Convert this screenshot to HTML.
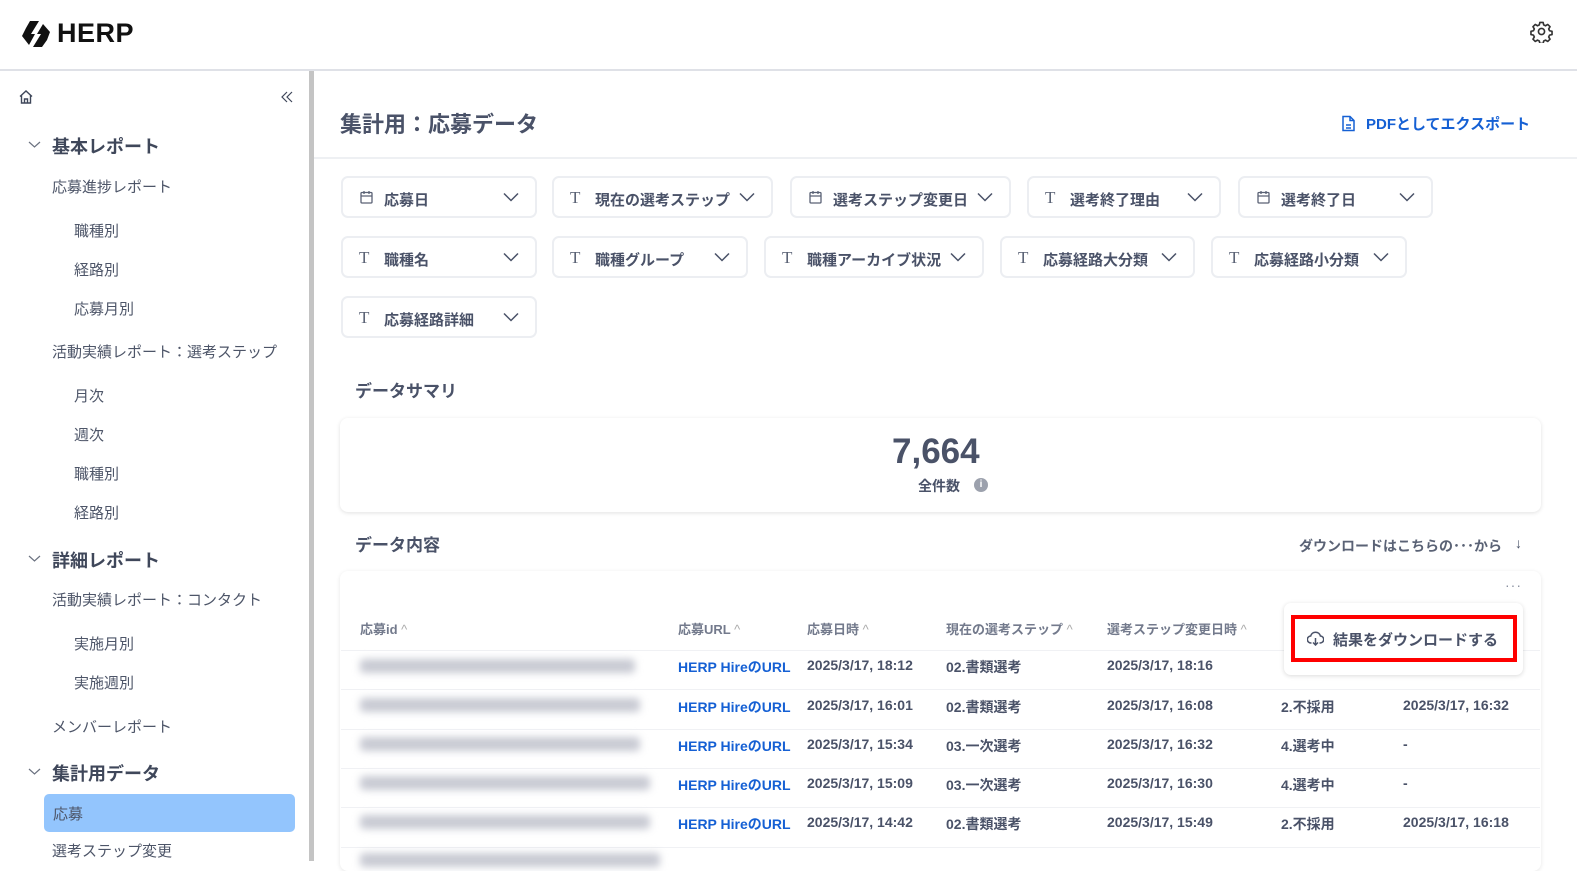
<!DOCTYPE html>
<html><head><meta charset="utf-8"><style>
*{margin:0;padding:0;box-sizing:border-box}
body{width:1577px;height:861px;overflow:hidden;background:#fff;font-family:"Liberation Sans","Noto Sans CJK JP",sans-serif;color:#4a5268;position:relative}
.a{position:absolute;white-space:nowrap}
.side{font-size:15px;color:#4d5568}
.sh{font-size:18px;font-weight:bold;color:#3f475a}
.chip{position:absolute;height:42px;border:2px solid #eceef2;border-radius:7px;background:#fff;font-size:15px;color:#4a5268;font-weight:bold}
.chip .ic{position:absolute;left:16px;top:10px;font-family:"Liberation Serif",serif;font-size:17px;font-weight:normal;color:#5a6275}
.chip svg.ic{top:12px;left:17px}
.chip .tx{position:absolute;left:41px;top:11px}
.chip svg.dv{position:absolute;right:16px;top:14px}
.th{position:absolute;top:619px;font-size:13px;font-weight:bold;color:#737a8c}
.td{position:absolute;font-size:14px;font-weight:bold;color:#4a5268}
.lnk{color:#1560d4}
.hr{position:absolute;left:341px;width:1199px;height:1px;background:#f0f1f4}
.blur{position:absolute;left:360px;height:14px;width:275px;background:#c8cad3;filter:blur(4px);border-radius:4px}
</style></head><body>
<svg class="a" style="left:21px;top:21px" width="32" height="27" viewBox="0 0 32 27"><path d="M9 0h9l-8 13 4 0-6 11L1 15 5 7z" fill="#111"/><path d="M22 3l7 8-3 8-5 7h-9l8-13h-4z" fill="#111"/></svg>
<div class="a" style="left:57px;top:18px;font-size:27px;font-weight:bold;color:#111;letter-spacing:0.5px">HERP</div>
<svg class="a" style="left:1530px;top:20px" width="23" height="23" viewBox="0 0 24 24" fill="none" stroke="#333" stroke-width="1.7"><circle cx="12" cy="12" r="3.2"/><path d="M10.3 2.5h3.4l.6 2.6 1.9.9 2.3-1.4 2.4 2.4-1.4 2.3.9 1.9 2.6.6v3.4l-2.6.6-.9 1.9 1.4 2.3-2.4 2.4-2.3-1.4-1.9.9-.6 2.6h-3.4l-.6-2.6-1.9-.9-2.3 1.4-2.4-2.4 1.4-2.3-.9-1.9-2.6-.6v-3.4l2.6-.6.9-1.9-1.4-2.3 2.4-2.4 2.3 1.4 1.9-.9z" stroke-linejoin="round"/></svg>
<div class="a" style="left:0;top:69px;width:1577px;height:2px;background:#dfe1e7"></div>
<div class="a" style="left:309px;top:71px;width:5px;height:790px;background:#c4c4c4"></div>
<svg class="a" style="left:18px;top:89px" width="16" height="16" viewBox="0 0 16 16" fill="none" stroke="#3f475a" stroke-width="1.4"><path d="M2 7.5L8 2l6 5.5M3.5 6.5V14h9V6.5M6.5 14v-4h3v4"/></svg>
<svg class="a" style="left:280px;top:90px" width="14" height="14" viewBox="0 0 14 14" fill="none" stroke="#3f475a" stroke-width="1.2"><path d="M7 2L2 7l5 5M12 2L7 7l5 5"/></svg>
<svg class="a" style="left:28px;top:140px" width="13" height="9" viewBox="0 0 13 9" fill="none" stroke="#6b7280" stroke-width="1.2"><path d="M1 2l5.5 5L12 2"/></svg>
<div class="a sh" style="left:52px;top:133px">基本レポート</div>
<div class="a side" style="left:52px;top:176px">応募進捗レポート</div>
<div class="a side" style="left:74px;top:220px">職種別</div>
<div class="a side" style="left:74px;top:259px">経路別</div>
<div class="a side" style="left:74px;top:298px">応募月別</div>
<div class="a side" style="left:52px;top:341px">活動実績レポート：選考ステップ</div>
<div class="a side" style="left:74px;top:385px">月次</div>
<div class="a side" style="left:74px;top:424px">週次</div>
<div class="a side" style="left:74px;top:463px">職種別</div>
<div class="a side" style="left:74px;top:502px">経路別</div>
<svg class="a" style="left:28px;top:554px" width="13" height="9" viewBox="0 0 13 9" fill="none" stroke="#6b7280" stroke-width="1.2"><path d="M1 2l5.5 5L12 2"/></svg>
<div class="a sh" style="left:52px;top:547px">詳細レポート</div>
<div class="a side" style="left:52px;top:589px">活動実績レポート：コンタクト</div>
<div class="a side" style="left:74px;top:633px">実施月別</div>
<div class="a side" style="left:74px;top:672px">実施週別</div>
<div class="a side" style="left:52px;top:716px">メンバーレポート</div>
<svg class="a" style="left:28px;top:767px" width="13" height="9" viewBox="0 0 13 9" fill="none" stroke="#6b7280" stroke-width="1.2"><path d="M1 2l5.5 5L12 2"/></svg>
<div class="a sh" style="left:52px;top:760px">集計用データ</div>
<div class="a" style="left:44px;top:794px;width:251px;height:38px;background:#93c5fd;border-radius:5px"></div>
<div class="a side" style="left:53px;top:803px">応募</div>
<div class="a side" style="left:52px;top:840px">選考ステップ変更</div>

<div class="a" style="left:340px;top:107px;font-size:22px;font-weight:bold;color:#4a5268">集計用：応募データ</div>
<svg class="a" style="left:1341px;top:115px" width="15" height="17" viewBox="0 0 15 17" fill="none" stroke="#1560d4" stroke-width="1.5"><path d="M2 1.5h7l4 4v10H2z M9 1.5v4h4 M5 10h5 M5 13h5"/></svg>
<div class="a" style="left:1366px;top:113px;font-size:15px;font-weight:bold;color:#1560d4">PDFとしてエクスポート</div>
<div class="a" style="left:314px;top:157px;width:1263px;height:2px;background:#eef0f3"></div>

<div class="chip" style="left:341px;top:176px;width:196px"><svg class="ic" width="13" height="14" viewBox="0 0 13 14" fill="none" stroke="#5a6275" stroke-width="1.3"><rect x="1" y="2.5" width="11" height="10.5" rx="1"/><path d="M1 6h11M4 1v3M9 1v3"/></svg><span class="tx">応募日</span><svg class="dv" width="16" height="10" viewBox="0 0 16 10" fill="none" stroke="#4a5268" stroke-width="1.5"><path d="M1 1.5l7 7 7-7"/></svg></div>
<div class="chip" style="left:552px;top:176px;width:221px"><span class="ic">T</span><span class="tx">現在の選考ステップ</span><svg class="dv" width="16" height="10" viewBox="0 0 16 10" fill="none" stroke="#4a5268" stroke-width="1.5"><path d="M1 1.5l7 7 7-7"/></svg></div>
<div class="chip" style="left:790px;top:176px;width:221px"><svg class="ic" width="13" height="14" viewBox="0 0 13 14" fill="none" stroke="#5a6275" stroke-width="1.3"><rect x="1" y="2.5" width="11" height="10.5" rx="1"/><path d="M1 6h11M4 1v3M9 1v3"/></svg><span class="tx">選考ステップ変更日</span><svg class="dv" width="16" height="10" viewBox="0 0 16 10" fill="none" stroke="#4a5268" stroke-width="1.5"><path d="M1 1.5l7 7 7-7"/></svg></div>
<div class="chip" style="left:1027px;top:176px;width:194px"><span class="ic">T</span><span class="tx">選考終了理由</span><svg class="dv" width="16" height="10" viewBox="0 0 16 10" fill="none" stroke="#4a5268" stroke-width="1.5"><path d="M1 1.5l7 7 7-7"/></svg></div>
<div class="chip" style="left:1238px;top:176px;width:195px"><svg class="ic" width="13" height="14" viewBox="0 0 13 14" fill="none" stroke="#5a6275" stroke-width="1.3"><rect x="1" y="2.5" width="11" height="10.5" rx="1"/><path d="M1 6h11M4 1v3M9 1v3"/></svg><span class="tx">選考終了日</span><svg class="dv" width="16" height="10" viewBox="0 0 16 10" fill="none" stroke="#4a5268" stroke-width="1.5"><path d="M1 1.5l7 7 7-7"/></svg></div>

<div class="chip" style="left:341px;top:236px;width:196px"><span class="ic">T</span><span class="tx">職種名</span><svg class="dv" width="16" height="10" viewBox="0 0 16 10" fill="none" stroke="#4a5268" stroke-width="1.5"><path d="M1 1.5l7 7 7-7"/></svg></div>
<div class="chip" style="left:552px;top:236px;width:196px"><span class="ic">T</span><span class="tx">職種グループ</span><svg class="dv" width="16" height="10" viewBox="0 0 16 10" fill="none" stroke="#4a5268" stroke-width="1.5"><path d="M1 1.5l7 7 7-7"/></svg></div>
<div class="chip" style="left:764px;top:236px;width:220px"><span class="ic">T</span><span class="tx">職種アーカイブ状況</span><svg class="dv" width="16" height="10" viewBox="0 0 16 10" fill="none" stroke="#4a5268" stroke-width="1.5"><path d="M1 1.5l7 7 7-7"/></svg></div>
<div class="chip" style="left:1000px;top:236px;width:195px"><span class="ic">T</span><span class="tx">応募経路大分類</span><svg class="dv" width="16" height="10" viewBox="0 0 16 10" fill="none" stroke="#4a5268" stroke-width="1.5"><path d="M1 1.5l7 7 7-7"/></svg></div>
<div class="chip" style="left:1211px;top:236px;width:196px"><span class="ic">T</span><span class="tx">応募経路小分類</span><svg class="dv" width="16" height="10" viewBox="0 0 16 10" fill="none" stroke="#4a5268" stroke-width="1.5"><path d="M1 1.5l7 7 7-7"/></svg></div>
<div class="chip" style="left:341px;top:296px;width:196px"><span class="ic">T</span><span class="tx">応募経路詳細</span><svg class="dv" width="16" height="10" viewBox="0 0 16 10" fill="none" stroke="#4a5268" stroke-width="1.5"><path d="M1 1.5l7 7 7-7"/></svg></div>

<div class="a" style="left:355px;top:377px;font-size:17px;font-weight:bold;color:#4a5268">データサマリ</div>
<div class="a" style="left:340px;top:418px;width:1201px;height:94px;border-radius:8px;box-shadow:0 1px 4px rgba(0,0,0,.12);background:#fff"></div>
<div class="a" style="left:892px;top:432px;font-size:35px;font-weight:bold;color:#4a5268">7,664</div>
<div class="a" style="left:918px;top:476px;font-size:14px;font-weight:bold;color:#4a5268">全件数</div>
<div class="a" style="left:974px;top:478px;width:14px;height:14px;border-radius:50%;background:#9ca1ad;color:#fff;font-size:10px;font-weight:bold;text-align:center;line-height:14px">i</div>

<div class="a" style="left:355px;top:531px;font-size:17px;font-weight:bold;color:#4a5268">データ内容</div>
<div class="a" style="left:1299px;top:536px;font-size:14px;font-weight:bold;color:#5a6275">ダウンロードはこちらの･･･から</div>
<div class="a" style="left:1515px;top:535px;font-size:14px;font-weight:bold;color:#4a5268">↓</div>

<div class="a" style="left:340px;top:571px;width:1201px;height:300px;border-radius:8px;box-shadow:0 1px 4px rgba(0,0,0,.1);background:#fff"></div>
<div class="a" style="left:1505px;top:577px;font-size:14px;color:#8a90a0;letter-spacing:1px">···</div>

<div class="th" style="left:360px">応募id <span style="font-weight:normal;color:#aaa">^</span></div>
<div class="th" style="left:678px">応募URL <span style="font-weight:normal;color:#aaa">^</span></div>
<div class="th" style="left:807px">応募日時 <span style="font-weight:normal;color:#aaa">^</span></div>
<div class="th" style="left:946px">現在の選考ステップ <span style="font-weight:normal;color:#aaa">^</span></div>
<div class="th" style="left:1107px">選考ステップ変更日時 <span style="font-weight:normal;color:#aaa">^</span></div>

<div class="hr" style="top:650px"></div><div class="hr" style="top:689px"></div><div class="hr" style="top:729px"></div><div class="hr" style="top:768px"></div><div class="hr" style="top:807px"></div><div class="hr" style="top:847px"></div>

<div class="blur" style="top:659px"></div><div class="blur" style="top:698px;width:280px"></div><div class="blur" style="top:737px;width:280px"></div><div class="blur" style="top:776px;width:290px"></div><div class="blur" style="top:815px;width:290px"></div><div class="blur" style="top:853px;width:300px"></div>

<div class="td lnk" style="left:678px;top:657px">HERP HireのURL</div>
<div class="td lnk" style="left:678px;top:697px">HERP HireのURL</div>
<div class="td lnk" style="left:678px;top:736px">HERP HireのURL</div>
<div class="td lnk" style="left:678px;top:775px">HERP HireのURL</div>
<div class="td lnk" style="left:678px;top:814px">HERP HireのURL</div>

<div class="td" style="left:807px;top:657px">2025/3/17, 18:12</div>
<div class="td" style="left:807px;top:697px">2025/3/17, 16:01</div>
<div class="td" style="left:807px;top:736px">2025/3/17, 15:34</div>
<div class="td" style="left:807px;top:775px">2025/3/17, 15:09</div>
<div class="td" style="left:807px;top:814px">2025/3/17, 14:42</div>

<div class="td" style="left:946px;top:657px">02.書類選考</div>
<div class="td" style="left:946px;top:697px">02.書類選考</div>
<div class="td" style="left:946px;top:736px">03.一次選考</div>
<div class="td" style="left:946px;top:775px">03.一次選考</div>
<div class="td" style="left:946px;top:814px">02.書類選考</div>

<div class="td" style="left:1107px;top:657px">2025/3/17, 18:16</div>
<div class="td" style="left:1107px;top:697px">2025/3/17, 16:08</div>
<div class="td" style="left:1107px;top:736px">2025/3/17, 16:32</div>
<div class="td" style="left:1107px;top:775px">2025/3/17, 16:30</div>
<div class="td" style="left:1107px;top:814px">2025/3/17, 15:49</div>

<div class="td" style="left:1281px;top:697px">2.不採用</div>
<div class="td" style="left:1281px;top:736px">4.選考中</div>
<div class="td" style="left:1281px;top:775px">4.選考中</div>
<div class="td" style="left:1281px;top:814px">2.不採用</div>

<div class="td" style="left:1403px;top:697px">2025/3/17, 16:32</div>
<div class="td" style="left:1403px;top:736px">-</div>
<div class="td" style="left:1403px;top:775px">-</div>
<div class="td" style="left:1403px;top:814px">2025/3/17, 16:18</div>

<div class="a" style="left:1284px;top:603px;width:239px;height:72px;background:#fff;border-radius:7px;box-shadow:0 1px 5px rgba(0,0,0,.15)"></div>
<div class="a" style="left:1291px;top:615px;width:226px;height:47px;border:4px solid #f00"></div>
<svg class="a" style="left:1307px;top:631px" width="17" height="15" viewBox="0 0 17 15" fill="none" stroke="#4a5268" stroke-width="1.5"><path d="M4.5 12H4a3.5 3.5 0 0 1-.3-7A5 5 0 0 1 13.4 5 3.5 3.5 0 0 1 13 12h-.5M8.5 7v7M6 11.5l2.5 2.5 2.5-2.5"/></svg>
<div class="a" style="left:1333px;top:629px;font-size:15px;font-weight:bold;color:#4a5268">結果をダウンロードする</div>
</body></html>
